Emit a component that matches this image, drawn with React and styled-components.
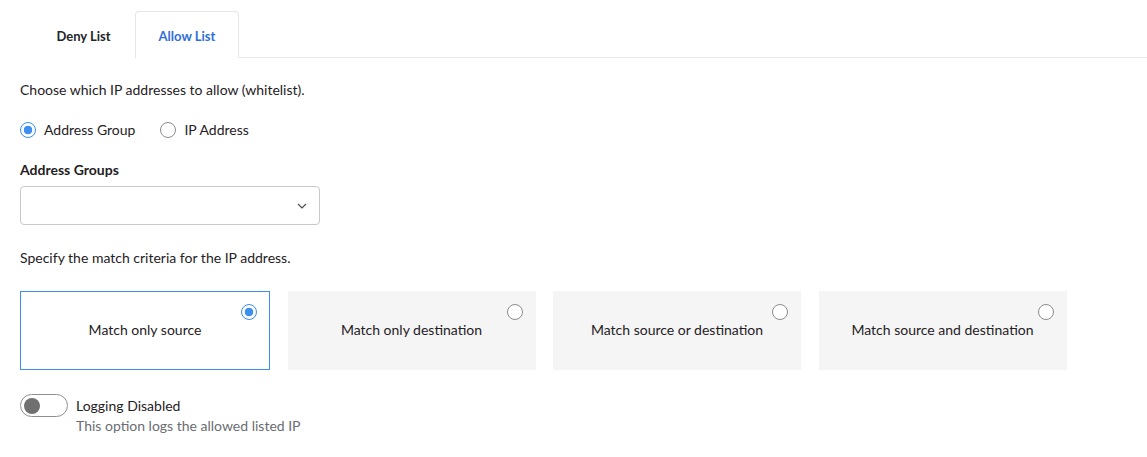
import React, { useState } from "react";
import styled, { createGlobalStyle } from "styled-components";

const GlobalStyle = createGlobalStyle`
  body {
    margin: 0;
    background: #ffffff;
    font-family: Lato, "Open Sans", "Liberation Sans", sans-serif;
    color: #1f2124;
  }
`;

const criteria = [
  "Match only source",
  "Match only destination",
  "Match source or destination",
  "Match source and destination",
];

const App = () => {
  const [tab, setTab] = useState("allow");
  const [kind, setKind] = useState("group");
  const [match, setMatch] = useState(0);

  return (
    <Page>
      <GlobalStyle />
      <TabBar>
        <Tab
          $active={tab === "deny"}
          $width={115}
          $indent={12}
          onClick={() => setTab("deny")}
        >
          Deny List
        </Tab>
        <Tab $active={tab === "allow"} $width={104} onClick={() => setTab("allow")}>
          Allow List
        </Tab>
      </TabBar>

      <Intro>Choose which IP addresses to allow (whitelist).</Intro>

      <RadioRow>
        <RadioOption onClick={() => setKind("group")}>
          <Radio $checked={kind === "group"} />
          Address Group
        </RadioOption>
        <RadioOption onClick={() => setKind("ip")}>
          <Radio $checked={kind === "ip"} />
          IP Address
        </RadioOption>
      </RadioRow>

      <FieldLabel>Address Groups</FieldLabel>
      <Select>
        <svg width="10" height="6" viewBox="0 0 10 6" fill="none">
          <polyline points="1,1 5,5 9,1" stroke="#4a4d52" strokeWidth="1.2" />
        </svg>
      </Select>

      <Intro $top={23}>Specify the match criteria for the IP address.</Intro>

      <Cards>
        {criteria.map((label, i) => (
          <Card key={label} $selected={match === i} onClick={() => setMatch(i)}>
            {label}
            <CardRadio $checked={match === i} />
          </Card>
        ))}
      </Cards>

      <ToggleRow>
        <Toggle>
          <Knob />
        </Toggle>
        <ToggleText>
          <ToggleTitle>Logging Disabled</ToggleTitle>
          <ToggleHint>This option logs the allowed listed IP</ToggleHint>
        </ToggleText>
      </ToggleRow>
    </Page>
  );
};

export default App;

const Page = styled.div`
  padding: 11px 0 0 20px;
  font-size: 14px;
  line-height: 20px;
`;

const TabBar = styled.div`
  display: flex;
  height: 46px;
  border-bottom: 1px solid #e9e9e9;
`;

const Tab = styled.div`
  width: ${(p) => p.$width}px;
  box-sizing: border-box;
  display: flex;
  align-items: center;
  justify-content: center;
  padding: 2px 0 0 ${(p) => p.$indent ?? 0}px;
  font-size: 13px;
  font-weight: 700;
  color: ${(p) => (p.$active ? "#2f6ed6" : "#222428")};
  background: #ffffff;
  border: 1px solid ${(p) => (p.$active ? "#e6e6e6" : "transparent")};
  border-bottom: none;
  border-radius: 4px 4px 0 0;
  margin-bottom: -1px;
  cursor: pointer;
`;

const Intro = styled.div`
  margin-top: ${(p) => p.$top ?? 22}px;
`;

const RadioRow = styled.div`
  display: flex;
  gap: 25px;
  margin-top: 20px;
`;

const RadioOption = styled.label`
  display: flex;
  align-items: center;
  gap: 8px;
  cursor: pointer;
`;

const Radio = styled.span`
  width: 16px;
  height: 16px;
  box-sizing: border-box;
  border-radius: 50%;
  border: ${(p) => (p.$checked ? "1.5px solid #3d8fef" : "1px solid #8c8c8c")};
  background: ${(p) =>
    p.$checked
      ? "radial-gradient(circle, #3d8fef 0 4px, #ffffff 4.6px)"
      : "#ffffff"};
  flex-shrink: 0;
`;

const FieldLabel = styled.div`
  margin-top: 20px;
  font-weight: 700;
`;

const Select = styled.div`
  margin-top: 6px;
  width: 300px;
  height: 39px;
  box-sizing: border-box;
  border: 1px solid #c9c9c9;
  border-radius: 4px;
  display: flex;
  align-items: center;
  justify-content: flex-end;
  padding-right: 12px;
`;

const Cards = styled.div`
  display: grid;
  grid-template-columns: 250px 248px 248px 248px;
  column-gap: 17.5px;
  margin-top: 23px;
`;

const Card = styled.div`
  position: relative;
  height: 79px;
  box-sizing: border-box;
  display: flex;
  align-items: center;
  justify-content: center;
  padding-bottom: 2px;
  font-size: 14px;
  color: #1f2124;
  background: ${(p) => (p.$selected ? "#ffffff" : "#f5f5f5")};
  border: 1px solid ${(p) => (p.$selected ? "#3d8fef" : "#f5f5f5")};
  cursor: pointer;
`;

const CardRadio = styled(Radio)`
  position: absolute;
  top: 12px;
  right: 12px;
`;

const ToggleRow = styled.div`
  display: flex;
  align-items: flex-start;
  gap: 8px;
  margin-top: 24px;
`;

const Toggle = styled.div`
  width: 48px;
  height: 23px;
  box-sizing: border-box;
  border: 1px solid #8f8f8f;
  border-radius: 12px;
  background: #ffffff;
  display: flex;
  align-items: center;
  padding-left: 3px;
`;

const Knob = styled.span`
  width: 16px;
  height: 16px;
  border-radius: 50%;
  background: #707070;
`;

const ToggleText = styled.div`
  margin-top: 2px;
  display: flex;
  flex-direction: column;
`;

const ToggleTitle = styled.div`
  color: #1f2124;
`;

const ToggleHint = styled.div`
  color: #6a6d72;
`;
